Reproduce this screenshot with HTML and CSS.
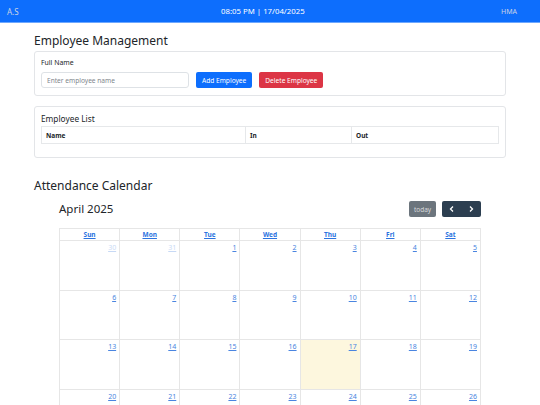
FILE: index.html
```html
<!DOCTYPE html>
<html>
<head>
<meta charset="utf-8">
<link rel="stylesheet" href="styles.css">
</head>
<body>
<nav class="navbar">
  <span class="brand">A.S</span>
  <span class="clock">08:05 PM | 17/04/2025</span>
  <span class="user">HMA</span>
</nav>
<main class="container">
  <h2 class="title">Employee Management</h2>
  <section class="card">
    <label class="label">Full Name</label>
    <div class="form-row">
      <input class="input" type="text" placeholder="Enter employee name">
      <button class="btn btn-primary">Add Employee</button>
      <button class="btn btn-danger">Delete Employee</button>
    </div>
  </section>
  <section class="card card-list">
    <h5 class="card-title">Employee List</h5>
    <table class="emp-table">
      <thead>
        <tr><th class="c-name">Name</th><th class="c-in">In</th><th>Out</th></tr>
      </thead>
    </table>
  </section>

  <h2 class="title title-cal">Attendance Calendar</h2>
  <div class="calendar">
    <div class="toolbar">
      <h3 class="month">April 2025</h3>
      <div class="tools">
        <button class="today">today</button>
        <div class="nav-group">
          <button class="arrow"><svg width="8" height="8" viewBox="0 0 8 8"><path d="M5 1.5 2.5 4 5 6.5" fill="none" stroke="#fff" stroke-width="1.3"/></svg></button>
          <button class="arrow"><svg width="8" height="8" viewBox="0 0 8 8"><path d="M3 1.5 5.5 4 3 6.5" fill="none" stroke="#fff" stroke-width="1.3"/></svg></button>
        </div>
      </div>
    </div>
    <div class="grid">
      <div class="dow"><a>Sun</a></div>
      <div class="dow"><a>Mon</a></div>
      <div class="dow"><a>Tue</a></div>
      <div class="dow"><a>Wed</a></div>
      <div class="dow"><a>Thu</a></div>
      <div class="dow"><a>Fri</a></div>
      <div class="dow"><a>Sat</a></div>

      <div class="day other"><a>30</a></div>
      <div class="day other"><a>31</a></div>
      <div class="day"><a>1</a></div>
      <div class="day"><a>2</a></div>
      <div class="day"><a>3</a></div>
      <div class="day"><a>4</a></div>
      <div class="day"><a>5</a></div>

      <div class="day"><a>6</a></div>
      <div class="day"><a>7</a></div>
      <div class="day"><a>8</a></div>
      <div class="day"><a>9</a></div>
      <div class="day"><a>10</a></div>
      <div class="day"><a>11</a></div>
      <div class="day"><a>12</a></div>

      <div class="day"><a>13</a></div>
      <div class="day"><a>14</a></div>
      <div class="day"><a>15</a></div>
      <div class="day"><a>16</a></div>
      <div class="day is-today"><a>17</a></div>
      <div class="day"><a>18</a></div>
      <div class="day"><a>19</a></div>

      <div class="day"><a>20</a></div>
      <div class="day"><a>21</a></div>
      <div class="day"><a>22</a></div>
      <div class="day"><a>23</a></div>
      <div class="day"><a>24</a></div>
      <div class="day"><a>25</a></div>
      <div class="day"><a>26</a></div>
    </div>
  </div>
</main>
</body>
</html>
```

FILE: styles.css
```css
* { box-sizing: border-box; }
html, body { margin: 0; padding: 0; }
body {
  font-family: "Noto Sans", "Open Sans", sans-serif;
  color: #212529;
  background: #fff;
  font-size: 8px;
  overflow: hidden;
  height: 405px;
}
.navbar {
  height: 23px;
  background: #0d6efd;
  display: flex;
  align-items: center;
  justify-content: space-between;
  padding: 0 23px 0 7px;
  font-size: 7.8px;
  border-bottom: 1px solid #6ea8fe;
}
.brand { color: #c9d3e6; font-size: 8px; }
.clock { color: #fff; margin-left: 6px; }
.user { color: #c9d3e6; font-size: 7px; }

.container {
  width: 472px;
  margin: 0 auto;
}
.title {
  font-size: 12px;
  font-weight: 400;
  margin: 10px 0 3px;
  line-height: 15px;
}
.title-cal { margin-top: 20px; }
.card {
  border: 1px solid #e3e5e8;
  border-radius: 3px;
  padding: 6px 6px 7px;
  margin-bottom: 10px;
}
.label {
  display: block;
  font-size: 6.9px;
  line-height: 10px;
  margin-bottom: 4px;
}
.form-row {
  display: flex;
  align-items: center;
  gap: 7px;
}
.input {
  width: 148px;
  height: 16px;
  border: 1px solid #dee2e6;
  border-radius: 3px;
  padding: 0 5px;
  font-family: inherit;
  font-size: 6.6px;
  color: #6c757d;
}
.input::placeholder { color: #80868c; }
.btn {
  height: 16px;
  border: none;
  border-radius: 2px;
  font-family: inherit;
  font-size: 6.6px;
  color: #fff;
  padding: 0 6px;
}
.btn-primary { background: #0d6efd; }
.btn-danger { background: #dc3545; }

.card-list { padding-bottom: 13px; }
.card-title {
  font-size: 8.3px;
  font-weight: 400;
  margin: 0 0 2px;
  line-height: 11px;
}
.emp-table {
  width: 100%;
  border-collapse: collapse;
}
.emp-table th {
  text-align: left;
  font-size: 6.5px;
  font-weight: 700;
  height: 17px;
  padding: 0 4px;
  border: 1px solid #e6e8ea;
}
.c-name { width: 204px; }
.c-in { width: 106px; }

.calendar {
  margin: 0 25px;
}
.toolbar {
  display: flex;
  justify-content: space-between;
  align-items: center;
  margin-top: 8px;
  margin-bottom: 11px;
}
.month {
  font-size: 11.5px;
  font-weight: 400;
  margin: 0;
  line-height: 16px;
}
.tools { display: flex; gap: 6px; }
.today {
  height: 16px;
  width: 27px;
  background: #6c757d;
  border: none;
  border-radius: 2px;
  color: #d8dadc;
  font-family: inherit;
  font-size: 6.5px;
  padding: 0;
}
.nav-group {
  display: flex;
  background: #2c3e50;
  border-radius: 2px;
  height: 16px;
}
.arrow {
  width: 19.5px;
  height: 16px;
  background: transparent;
  border: none;
  padding: 0;
  display: flex;
  align-items: center;
  justify-content: center;
}
.grid {
  display: grid;
  grid-template-columns: repeat(7, 1fr);
  grid-template-rows: 12px repeat(4, 49.7px);
  border-top: 1px solid #e6e6e6;
  border-left: 1px solid #e6e6e6;
}
.grid > div {
  border-right: 1px solid #e6e6e6;
  border-bottom: 1px solid #e6e6e6;
}
.dow {
  text-align: center;
  font-size: 6.5px;
  font-weight: 700;
  line-height: 11px;
}
.dow a, .day a {
  color: #2b73e0;
  text-decoration: underline;
}
.day {
  text-align: right;
  padding: 2px 3px;
  font-size: 7px;
  line-height: 10px;
}
.day a { color: #4a85e0; }
.day.other a { opacity: 0.3; }
.is-today { background: #fdf7de; }
```
